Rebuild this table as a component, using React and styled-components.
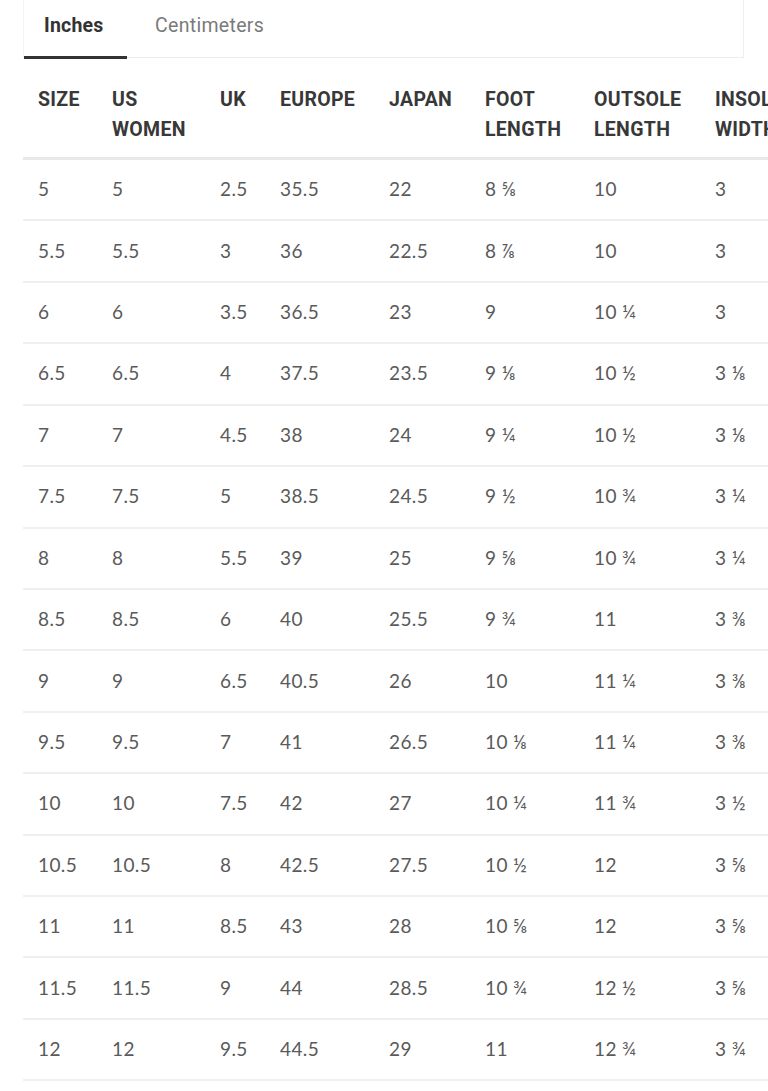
import styled, { createGlobalStyle } from "styled-components";

const GlobalStyle = createGlobalStyle`
  html, body {
    margin: 0;
    padding: 0;
    background: #fff;
  }
  body {
    font-family: Lato, "Open Sans", sans-serif;
    overflow: hidden;
  }
`;

const COLS = "74px 108px 60px 109px 96px 109px 121px 130px";

const headers = [
  ["SIZE"],
  ["US", "WOMEN"],
  ["UK"],
  ["EUROPE"],
  ["JAPAN"],
  ["FOOT", "LENGTH"],
  ["OUTSOLE", "LENGTH"],
  ["INSOLE", "WIDTH"],
];

const rows = [
  ["5", "5", "2.5", "35.5", "22", "8 ⅝", "10", "3"],
  ["5.5", "5.5", "3", "36", "22.5", "8 ⅞", "10", "3"],
  ["6", "6", "3.5", "36.5", "23", "9", "10 ¼", "3"],
  ["6.5", "6.5", "4", "37.5", "23.5", "9 ⅛", "10 ½", "3 ⅛"],
  ["7", "7", "4.5", "38", "24", "9 ¼", "10 ½", "3 ⅛"],
  ["7.5", "7.5", "5", "38.5", "24.5", "9 ½", "10 ¾", "3 ¼"],
  ["8", "8", "5.5", "39", "25", "9 ⅝", "10 ¾", "3 ¼"],
  ["8.5", "8.5", "6", "40", "25.5", "9 ¾", "11", "3 ⅜"],
  ["9", "9", "6.5", "40.5", "26", "10", "11 ¼", "3 ⅜"],
  ["9.5", "9.5", "7", "41", "26.5", "10 ⅛", "11 ¼", "3 ⅜"],
  ["10", "10", "7.5", "42", "27", "10 ¼", "11 ¾", "3 ½"],
  ["10.5", "10.5", "8", "42.5", "27.5", "10 ½", "12", "3 ⅝"],
  ["11", "11", "8.5", "43", "28", "10 ⅝", "12", "3 ⅝"],
  ["11.5", "11.5", "9", "44", "28.5", "10 ¾", "12 ½", "3 ⅝"],
  ["12", "12", "9.5", "44.5", "29", "11", "12 ¾", "3 ¾"],
];

const Page = styled.div`
  padding-left: 23px;
  width: 900px;
`;

const Tabs = styled.div`
  display: flex;
  width: 721px;
  height: 58px;
  box-sizing: border-box;
  border-left: 1px solid #f4f4f4;
  border-right: 1px solid #efefef;
  border-bottom: 1px solid #ececec;
  align-items: stretch;
`;

const Tab = styled.div`
  display: flex;
  align-items: center;
  padding: 0 ${(p) => (p.$active ? "20px" : "0")};
  margin-left: ${(p) => (p.$active ? "0" : "28px")};
  padding-bottom: 6px;
  font-family: Roboto, "Liberation Sans", sans-serif;
  font-size: 19.5px;
  font-weight: ${(p) => (p.$active ? 700 : 400)};
  color: ${(p) => (p.$active ? "#333" : "#7a7a7a")};
  letter-spacing: ${(p) => (p.$active ? "0.2px" : "0.3px")};
  border-bottom: 3px solid ${(p) => (p.$active ? "#333" : "transparent")};
  margin-bottom: -2px;
  width: ${(p) => (p.$active ? "103px" : "auto")};
  box-sizing: border-box;
`;

const Row = styled.div`
  display: grid;
  grid-template-columns: ${COLS};
  box-sizing: border-box;
  border-bottom: 2px solid #efefef;
`;

const HeadRow = styled(Row)`
  height: 102px;
  padding-top: 27px;
  border-bottom: 3px solid #e9e9e9;
`;

const BodyRow = styled(Row)`
  height: 61.43px;
  align-items: center;
`;

const HeadCell = styled.div`
  padding-left: 15px;
  font-family: Roboto, "Liberation Sans", sans-serif;
  font-size: 19.5px;
  font-weight: 700;
  line-height: 30px;
  letter-spacing: 0.3px;
  color: #383838;
  white-space: nowrap;
`;

const Cell = styled.div`
  padding-left: 15px;
  padding-bottom: 2px;
  font-family: Lato, "Open Sans", sans-serif;
  font-size: 19px;
  color: #5a5a5a;
  letter-spacing: 0.4px;
  white-space: nowrap;
`;

export default function App() {
  return (
    <Page>
      <GlobalStyle />
      <Tabs>
        <Tab $active>Inches</Tab>
        <Tab>Centimeters</Tab>
      </Tabs>
      <HeadRow>
        {headers.map((h, i) => (
          <HeadCell key={i}>
            {h.map((line, j) => (
              <div key={j}>{line}</div>
            ))}
          </HeadCell>
        ))}
      </HeadRow>
      {rows.map((r, i) => (
        <BodyRow key={i}>
          {r.map((v, j) => (
            <Cell key={j}>{v}</Cell>
          ))}
        </BodyRow>
      ))}
    </Page>
  );
}
